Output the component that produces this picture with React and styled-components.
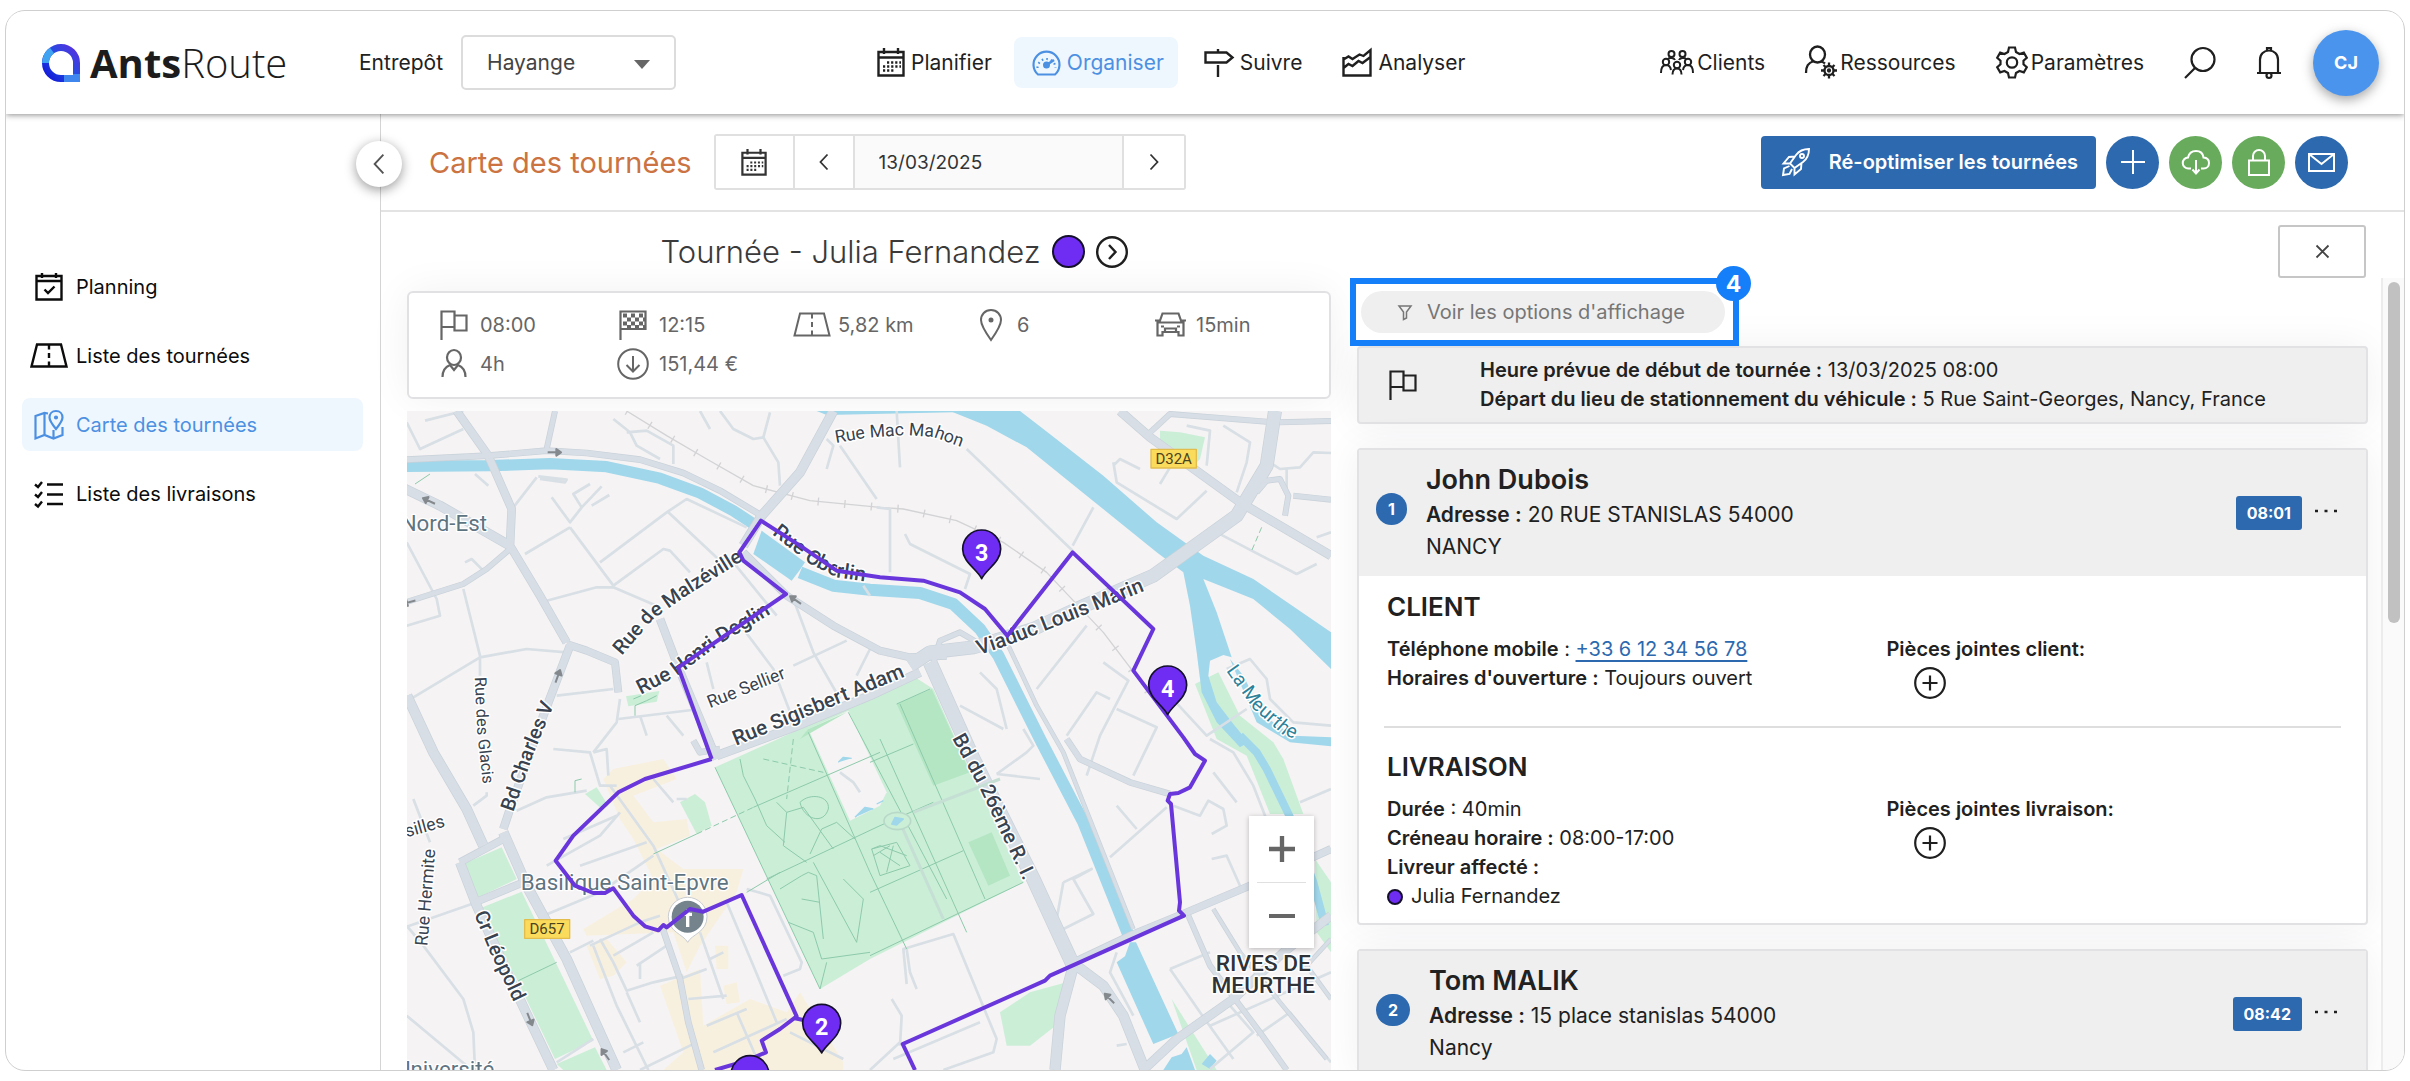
import styled, { createGlobalStyle } from 'styled-components';

const GlobalStyle = createGlobalStyle`
    * { box-sizing: border-box; }
    body {
        margin: 0;
        background: #fff;
        color: #212121;
        font-family: Inter, "Liberation Sans", sans-serif;
        font-size: 20px;
    }
    button, input, select { font: inherit; color: inherit; }
    button { cursor: pointer; padding: 0; }
    a { text-decoration: none; }
`;

/* ---------- shell ---------- */

const Frame = styled.div`
    display: flex;
    flex-direction: column;
    height: calc(100vh - 20px);
    margin: 10px 5px;
    border: 1px solid #cfcfcf;
    border-radius: 20px;
    overflow: hidden;
`;

const Header = styled.header`
    display: flex;
    align-items: center;
    flex: none;
    height: 103px;
    padding: 0 25px 0 36px;
    background: #fff;
    font-size: 21px;
    box-shadow: 0 1px 6px rgba(0, 0, 0, 0.45);
    z-index: 2;
`;

const Body = styled.div`
    display: flex;
    flex: 1;
    min-height: 0;
`;

const Svg = styled.svg.attrs({ 'aria-hidden': true })`
    display: block;
    flex: none;
    fill: none;
    stroke: currentColor;
    stroke-width: ${({ $w }) => $w || 2};
    overflow: visible;
`;

/* ---------- header ---------- */

const Logo = styled.a`
    display: flex;
    align-items: center;
    gap: 10px;
    width: 317px;
    color: #1c1c1c;
    font: 300 40px 'Open Sans', sans-serif;
    b { font-weight: 700; }
`;

const DepotLabel = styled.label`
    display: flex;
    align-items: center;
    gap: 18px;
`;

const SelectBox = styled.span`
    position: relative;
    svg {
        position: absolute;
        right: 26px;
        top: 25px;
        pointer-events: none;
    }
`;

const Select = styled.select`
    appearance: none;
    width: 215px;
    height: 55px;
    padding: 0 24px;
    border: 2px solid #dcdcdc;
    border-radius: 5px;
    background: #fff;
    color: #444;
`;

const Nav = styled.nav`
    display: flex;
    gap: 8px;
    margin-left: 183px;
`;

const NavLink = styled.a`
    display: flex;
    align-items: center;
    gap: 6px;
    height: 51px;
    padding: 0 14px 0 18px;
    border-radius: 8px;
    color: ${({ $active }) => ($active ? '#4c90e2' : '#1f1f1f')};
    background: ${({ $active }) => ($active ? '#eff7fe' : 'transparent')};
`;

const Tools = styled.div`
    display: flex;
    align-items: center;
    gap: 40px;
    margin-left: auto;
`;

const ToolLink = styled.a`
    display: flex;
    align-items: center;
    gap: 3px;
    color: #1f1f1f;
`;

const IconButton = styled.button`
    border: 0;
    background: none;
    color: #1f1f1f;
`;

const Avatar = styled.button`
    width: 66px;
    height: 66px;
    margin-left: -9px;
    border: 0;
    border-radius: 50%;
    background: #4a94ee;
    color: #fff;
    font-size: 18px;
    font-weight: 700;
    box-shadow: 0 4px 12px rgba(0, 0, 0, 0.35);
`;

/* ---------- sidebar ---------- */

const Sidebar = styled.aside`
    position: relative;
    flex: none;
    width: 375px;
    padding: 146px 17px 0 16px;
    border-right: 1px solid #d4d4d4;
`;

const Collapse = styled.button`
    position: absolute;
    top: 27px;
    right: -22px;
    display: grid;
    place-items: center;
    width: 46px;
    height: 46px;
    border: 0;
    border-radius: 50%;
    background: #fff;
    color: #555;
    box-shadow: 0 3px 12px rgba(0, 0, 0, 0.4);
    z-index: 1;
`;

const Menu = styled.nav`
    display: flex;
    flex-direction: column;
    gap: 16px;
`;

const MenuLink = styled.a`
    display: flex;
    align-items: center;
    gap: 8px;
    height: 53px;
    padding-left: 7px;
    border-radius: 8px;
    color: ${({ $active }) => ($active ? '#4c90e2' : '#0c0c0c')};
    background: ${({ $active }) => ($active ? '#eff7fe' : 'transparent')};
`;

const MenuIcon = styled.span`
    display: grid;
    place-items: center;
    width: 39px;
`;

/* ---------- toolbar ---------- */

const Main = styled.main`
    display: flex;
    flex-direction: column;
    flex: 1;
    min-width: 0;
`;

const Toolbar = styled.div`
    display: flex;
    align-items: center;
    flex: none;
    height: 98px;
    padding: 0 56px 0 48px;
    border-bottom: 2px solid #e3e3e3;
`;

const PageTitle = styled.h1`
    margin: 0 22px 0 0;
    color: #cb7341;
    font-size: 29px;
    font-weight: 400;
`;

const DatePicker = styled.div`
    display: flex;
    height: 56px;
    border: 2px solid #e0e0e0;
    border-radius: 3px;
`;

const DateButton = styled.button`
    display: grid;
    place-items: center;
    width: ${({ $wide }) => ($wide ? '77px' : '60px')};
    border: 0;
    background: #fff;
    color: #333;
    & + & { border-left: 2px solid #e0e0e0; }
`;

const DateInput = styled.input`
    width: 271px;
    padding: 0 24px;
    border: solid #e0e0e0;
    border-width: 0 2px;
    background: #fafafa;
    color: #333;
    font-size: 19px;
`;

const Actions = styled.div`
    display: flex;
    gap: 10px;
    margin-left: auto;
`;

const Primary = styled.button`
    display: flex;
    align-items: center;
    gap: 19px;
    height: 53px;
    padding: 0 18px 0 21px;
    border: 0;
    border-radius: 4px;
    background: #2d69ae;
    color: #fff;
    font-weight: 600;
`;

const Round = styled.button`
    display: grid;
    place-items: center;
    width: 53px;
    height: 53px;
    border: 0;
    border-radius: 50%;
    background: ${({ $green }) => ($green ? '#68ab5c' : '#2d69ae')};
    color: #fff;
`;

/* ---------- tour column ---------- */

const Workspace = styled.div`
    display: grid;
    grid-template-columns: minmax(0, 924fr) minmax(0, 1054fr);
    gap: 19px;
    flex: 1;
    min-height: 0;
    padding-left: 26px;
`;

const TourColumn = styled.section`
    display: flex;
    flex-direction: column;
    min-height: 0;
`;

const TourTitle = styled.h2`
    display: flex;
    align-items: center;
    justify-content: center;
    gap: 11px;
    height: 79px;
    margin: 0 0 0 50px;
    color: #3a3a3a;
    font-size: 31px;
    font-weight: 300;
`;

const Dot = styled.span`
    display: inline-block;
    flex: none;
    width: ${({ $size }) => $size}px;
    height: ${({ $size }) => $size}px;
    border: 2px solid #14102b;
    border-radius: 50%;
    background: #6f2cf3;
`;

const Stats = styled.ul`
    display: grid;
    grid-template-columns: repeat(5, 1fr);
    grid-auto-rows: 39px;
    flex: none;
    height: 108px;
    margin: 0;
    padding: 12px 0 0 25px;
    border: 2px solid #e1e1e3;
    border-radius: 6px;
    background: #fff;
    box-shadow: 0 0 40px rgba(30, 30, 60, 0.06);
    list-style: none;
`;

const Stat = styled.li`
    display: flex;
    align-items: center;
    gap: 6px;
    color: #666;
`;

const StatIcon = styled.span`
    display: grid;
    place-items: center;
    width: 40px;
`;

const MapBox = styled.div`
    position: relative;
    flex: 1;
    min-height: 0;
    margin-top: 12px;
    overflow: hidden;
    background: #f5f3f4;
`;

const MapSvg = styled.svg`
    display: block;
    width: 100%;
    height: 100%;
    fill: none;
    stroke-linejoin: round;
    font-family: Roboto, sans-serif;
`;

const ZoomBox = styled.div`
    position: absolute;
    right: 17px;
    bottom: 122px;
    display: flex;
    flex-direction: column;
    width: 65px;
    padding: 0 8px;
    background: #fff;
    box-shadow: 0 1px 5px rgba(0, 0, 0, 0.25);
`;

const ZoomButton = styled.button`
    display: grid;
    place-items: center;
    height: 66px;
    border: 0;
    background: #fff;
    color: #666;
    & + & { border-top: 1px solid #e0e0e0; }
`;

/* ---------- stops column ---------- */

const StopColumn = styled.section`
    display: flex;
    flex-direction: column;
    min-height: 0;
`;

const PanelTop = styled.div`
    display: flex;
    justify-content: flex-end;
    flex: none;
    height: 66px;
    padding: 13px 38px 0 0;
`;

const Close = styled.button`
    display: grid;
    place-items: center;
    width: 88px;
    height: 53px;
    border: 2px solid #c6c6c6;
    border-radius: 3px;
    background: #fff;
    color: #444;
`;

const Scroller = styled.div`
    display: flex;
    flex: 1;
    min-height: 0;
`;

const List = styled.div`
    flex: 1;
    padding-right: 13px;
`;

const Track = styled.div`
    flex: none;
    width: 23px;
    padding: 4px 0 0 5px;
    border-left: 2px solid #ececec;
    background: #fafafa;
`;

const Thumb = styled.div`
    width: 12px;
    height: 341px;
    border-radius: 6px;
    background: #c1c1c1;
`;

const Callout = styled.div`
    position: relative;
    width: 389px;
    height: 68px;
    padding: 7px 5px;
    border: 6px solid #147ff9;
    background: #fff;
    z-index: 1;
`;

const CalloutNumber = styled.span`
    position: absolute;
    top: -18px;
    right: -18px;
    display: grid;
    place-items: center;
    width: 35px;
    height: 35px;
    border-radius: 50%;
    background: #147ff9;
    color: #fff;
    font-size: 23px;
    font-weight: 700;
`;

const Options = styled.button`
    display: flex;
    align-items: center;
    gap: 15px;
    width: 364px;
    height: 42px;
    padding-left: 37px;
    border: 0;
    border-radius: 21px;
    background: #efefef;
    color: #767676;
`;

const Card = styled.article`
    margin: 0 0 24px 7px;
    border: 2px solid #e2e2e4;
    border-radius: 4px;
    background: #fff;
    box-shadow: 0 0 40px rgba(30, 30, 60, 0.06);
`;

const Departure = styled(Card)`
    display: flex;
    align-items: center;
    gap: 63px;
    height: 78px;
    padding-left: 30px;
    background: #efefef;
`;

const CardHead = styled.header`
    display: flex;
    align-items: center;
    height: 126px;
    padding: 0 28px 0 17px;
    background: #efefef;
`;

const Order = styled.span`
    display: grid;
    place-items: center;
    height: 32px;
    margin: 0 19px 8px 0;
    padding: 0 12px;
    border-radius: 16px;
    background: #2d69ae;
    color: #fff;
    font-size: 16px;
    font-weight: 700;
`;

const Who = styled.div`
    flex: 1;
    font-size: 21px;
    line-height: 32px;
`;

const Name = styled.h3`
    margin: 0 0 3px;
    font-size: 27px;
    font-weight: 600;
    line-height: 32px;
`;

const Time = styled.time`
    padding: 0 11px;
    border-radius: 3px;
    background: #2d69ae;
    color: #fff;
    font-size: 16px;
    font-weight: 700;
    line-height: 34px;
`;

const More = styled(IconButton)`
    margin-left: 12px;
`;

const Section = styled.section`
    margin: 0 25px;
    padding: 15px 3px 27px;
    & + & {
        padding: 23px 3px 12px;
        border-top: 2px solid #dedede;
    }
`;

const SectionTitle = styled.h4`
    margin: 0 0 12px;
    font-size: 26px;
    font-weight: 600;
    line-height: 32px;
`;

const Columns = styled.div`
    display: grid;
    grid-template-columns: 501fr 453fr;
    line-height: 29px;
`;

const Line = styled.div`
    line-height: 29px;
    b { font-weight: 600; }
`;

const AddressLine = styled(Line)`
    line-height: 32px;
`;

const Phone = styled.a`
    color: #2d69ae;
    text-decoration: underline;
    text-underline-offset: 4px;
`;

const Courier = styled(Line)`
    display: flex;
    align-items: center;
    gap: 8px;
`;

const AddButton = styled(IconButton)`
    display: block;
    margin: 3px 0 0 28px;
`;

/* ---------- icons ---------- */

const CalendarIcon = ({ size = 28 }) => (
    <Svg width={size} height={size + 1} viewBox="0 0 28 29" $w={2.4}>
        <path d="M1.5 4h25v23.500h-25zM1.500 9.500h25M7 0v6M21 0v6" />
        <path d="M10 14.500h14M6 18.500h18M6 22.500h12" strokeWidth="2.400" strokeDasharray="2.200 1.900" />
    </Svg>
);

const GaugeIcon = () => (
    <Svg width="29" height="26" viewBox="0 0 29 26" $w={2.2}>
        <path d="M6 24.500A13 13 0 1 1 23 24.500Z" />
        <path d="M5.500 18a9 9 0 1 1 18 0" strokeDasharray="1.600 3" />
        <circle cx="14.500" cy="15" r="2.400" fill="currentColor" />
        <path d="M14.500 15L22 10" strokeWidth="2.600" />
    </Svg>
);

const SignIcon = () => (
    <Svg width="30" height="28" viewBox="0 0 30 28" $w={2.4}>
        <path d="M1.500 3.500h21L28.500 8.500l-6 5h-21zM14 0v3.500M14 16v12" />
    </Svg>
);

const ChartIcon = () => (
    <Svg width="30" height="29" viewBox="0 0 30 29" $w={2.4}>
        <path d="M1.500 9v18.500h27V2l-7 6-4-1.500-7 4.500-4-2.500-5 3M1.500 20l5-4 4 2 6-5 4 2 8-6" />
    </Svg>
);

const PeopleIcon = () => (
    <Svg width="34" height="25" viewBox="0 0 34 25" $w={2}>
        <circle cx="11.500" cy="4" r="3" />
        <circle cx="22.500" cy="4" r="3" />
        <circle cx="6" cy="12" r="3.200" />
        <circle cx="28" cy="12" r="3.200" />
        <circle cx="17" cy="15" r="3.200" />
        <path d="M1 23c0-5 2-8 5-8s4.500 2 5 5M33 23c0-5-2-8-5-8s-4.500 2-5 5M12.500 24.500c0-4 1.500-6 4.500-6s4.500 2 4.500 6M8 9c1-1.500 6-1.500 7 1M26 9c-1-1.500-6-1.500-7 1" />
    </Svg>
);

const StaffIcon = () => (
    <Svg width="32" height="33" viewBox="0 0 32 33" $w={2.3}>
        <ellipse cx="12.500" cy="8.500" rx="7.500" ry="8" />
        <path d="M1 27c0-7 2-10 8-12M16 15.500c2 .5 3 1 4 2" />
        <circle cx="24" cy="24.500" r="4.500" />
        <circle cx="24" cy="24.500" r="1" />
        <path d="M24 16.500V20M24 29v3.500M16 24.500h3.500M28.500 24.500H32M18.500 19l2.300 2.300M27.200 27.700l2.300 2.300M29.500 19l-2.300 2.300M20.800 27.700L18.500 30" />
    </Svg>
);

const GearIcon = () => (
    <Svg width="32" height="33" viewBox="0 0 32 33" $w={2.2}>
        <path d="M13 1.500h6l1 4.500 3.500 2 4.300-1.400 3 5.200-3.300 3v3.400l3.300 3-3 5.200-4.300-1.400L20 27l-1 4.500h-6L12 27l-3.500-2-4.300 1.400-3-5.200 3.300-3v-3.400l-3.300-3 3-5.200L8.500 8 12 6z" />
        <circle cx="16" cy="16.500" r="5.200" />
    </Svg>
);

const SearchIcon = () => (
    <Svg width="32" height="32" viewBox="0 0 32 32" $w={2.2}>
        <circle cx="19" cy="12.500" r="11.500" />
        <path d="M11 21L1 31" />
    </Svg>
);

const BellIcon = () => (
    <Svg width="26" height="32" viewBox="0 0 26 32" $w={2.2}>
        <path d="M1 26h24M4 26V12.500C4 7 8 3.500 13 3.500S22 7 22 12.500V26M11 3.500V1h4v2.500" />
        <circle cx="13" cy="28.500" r="2.500" />
    </Svg>
);

const Chevron = ({ h = 16, right, w = 1.800 }) => (
    <Svg width={h / 2} height={h} viewBox="0 0 8 16" $w={w}>
        <path d={right ? 'M.5.5l7 7.500-7 7.500' : 'M7.500.5l-7 7.500 7 7.500'} />
    </Svg>
);

const PlanningIcon = () => (
    <Svg width="28" height="28" viewBox="0 0 28 28" $w={2.4}>
        <path d="M1.500 3h25v23.500h-25zM1.500 8h25M7 0v5M21 0v5M9.500 16.500l3.500 3.500 6.500-6.500" />
    </Svg>
);

const RoadIcon = ({ w = 2.4 }) => (
    <Svg width="38" height="25" viewBox="0 0 38 25" $w={w}>
        <path d="M7 1.500h24L36.500 23.500h-35z" />
        <path d="M19 1.500v22" strokeDasharray="5 3.500" />
    </Svg>
);

const FoldMapIcon = () => (
    <Svg width="30" height="30" viewBox="0 0 30 30" $w={2.2}>
        <path d="M14 3.500L10.500 3 1.500 6v22.500l9-3.500 9 3.500 9-3.500V17M10.500 3v22M19.500 20v8" />
        <path d="M22 1c-4 0-6.500 3-6.500 6.500C15.500 11 22 19 22 19s6.500-8 6.500-11.500C28.500 4 26 1 22 1z" />
        <circle cx="22" cy="7.500" r="1" />
    </Svg>
);

const ChecklistIcon = () => (
    <Svg width="29" height="26" viewBox="0 0 29 26" $w={2.4}>
        <path d="M13 3.500h16M13 13.500h16M13 23h16M1 3.500L4 6l4-5M1 13.500L4 16l4-5M1 23l3 2.500 4-5" />
    </Svg>
);

const RocketIcon = () => (
    <Svg width="28" height="28" viewBox="0 0 28 28" $w={1.9}>
        <path d="M27 1c-6 0-10 2-13 6L8 15.500l4.500 4.500 8.500-6c4-3 6-7 6-13zM13 8.500L7 9l-5.500 6.500L8 15.500M19.500 15l-.500 6-6.500 5.500V20M7.500 18L2 20.500 1 27l6.500-1L10 21" />
        <circle cx="20" cy="8" r="2" />
    </Svg>
);

const PlusIcon = ({ size = 24, w = 2 }) => (
    <Svg width={size} height={size} viewBox="0 0 24 24" $w={w}>
        <path d="M12 0v24M0 12h24" />
    </Svg>
);

const CloudIcon = () => (
    <Svg width="28" height="25" viewBox="0 0 28 25" $w={2}>
        <path d="M9 18.500H6.500A5.500 5.500 0 0 1 6 7.500C7 3 10 1 14 1s7 2.500 7.500 6.500c3.500.3 5.500 2.500 5.500 5.500s-2 5.500-5.500 5.500H19M14 10v13M10.500 19.500L14 23.500l3.500-4" />
    </Svg>
);

const LockIcon = () => (
    <Svg width="22" height="27" viewBox="0 0 22 27" $w={2}>
        <path d="M1 11.500h20V26H1zM5 11.500V7a6 6 0 0 1 12 0v4.500" />
    </Svg>
);

const MailIcon = () => (
    <Svg width="27" height="19" viewBox="0 0 27 19" $w={2}>
        <path d="M1 1h25v17H1zM1 1l12.500 10L26 1" />
    </Svg>
);

const NextCircle = () => (
    <Svg width="32" height="32" viewBox="0 0 32 32" $w={2.4}>
        <circle cx="16" cy="16" r="14.800" />
        <path d="M13 9l6.500 7-6.500 7" />
    </Svg>
);

const FlagIcon = () => (
    <Svg width="28" height="30" viewBox="0 0 28 30" $w={2.2}>
        <path d="M1.500 30V1.500h13V17h-13M14.500 5.500h12v15h-12z" />
    </Svg>
);

const FinishIcon = () => (
    <Svg width="28" height="30" viewBox="0 0 28 30" $w={2.2}>
        <path d="M1.500 30V1.500h25V19h-25" />
        <path d="M4 5.500h21M4 13.500h21" strokeWidth="4" strokeDasharray="4 4" />
        <path d="M8 9.500h18M8 17h18" strokeWidth="4" strokeDasharray="4 4" />
    </Svg>
);

const PinIcon = () => (
    <Svg width="22" height="32" viewBox="0 0 22 32" $w={2}>
        <path d="M11 1C5 1 1 5.500 1 11c0 6 10 20 10 20s10-14 10-20c0-5.500-4-10-10-10z" />
        <circle cx="11" cy="11" r="1.500" fill="currentColor" />
    </Svg>
);

const CarIcon = () => (
    <Svg width="31" height="25" viewBox="0 0 31 25" $w={2.2}>
        <path d="M2.500 10.500h26v13h-5V20h-16v3.500h-5zM4.500 10l3-8.500h16l3 8.500M0 8.500h5M26 8.500h5M10 19v-2.500h11V19" />
        <path d="M6 14.500h3M22 14.500h3" />
    </Svg>
);

const DriverIcon = () => (
    <Svg width="26" height="29" viewBox="0 0 26 29" $w={2.2}>
        <ellipse cx="13" cy="8.500" rx="7" ry="7.500" />
        <path d="M1.500 28c0-6 2.500-10 7.500-12l4 5 4-5c5 2 7.500 6 7.500 12" />
    </Svg>
);

const CostIcon = () => (
    <Svg width="32" height="32" viewBox="0 0 32 32" $w={2}>
        <circle cx="16" cy="16" r="14.800" />
        <path d="M16 8v15M9.500 17l6.500 6.500 6.500-6.500" />
    </Svg>
);

const FilterIcon = () => (
    <Svg width="14" height="15" viewBox="0 0 14 15" $w={1.500}>
        <path d="M1 1h12L8.500 7v6l-3 1.500V7z" />
    </Svg>
);

const CloseIcon = () => (
    <Svg width="13" height="13" viewBox="0 0 13 13" $w={1.800}>
        <path d="M.5.5l12 12M12.500.5l-12 12" />
    </Svg>
);

const DotsIcon = () => (
    <Svg width="24" height="20" viewBox="0 0 24 20">
        <path d="M1 8h3M10.500 8h3M20 8h3" strokeWidth="2.600" />
    </Svg>
);

const AddIcon = () => (
    <Svg width="32" height="32" viewBox="0 0 32 32" $w={2.2}>
        <circle cx="16" cy="16" r="14.800" />
        <path d="M16 8.500v15M8.500 16h15" />
    </Svg>
);

const LogoMark = () => (
    <Svg width="38" height="38" viewBox="0 0 38 38" $w={7}>
        <defs>
            <linearGradient id="mark" x1="0" y1="1" x2="1" y2="0">
                <stop offset="0" stopColor="#1413d8" />
                <stop offset=".5" stopColor="#1f4fe0" />
                <stop offset="1" stopColor="#5a2fe0" />
            </linearGradient>
        </defs>
        <path d="M34.500 34.500H19A15.500 15.500 0 1 1 34.500 19z" stroke="url(#mark)" />
        <path d="M3.500 19A15.500 15.500 0 0 1 10 6.500" stroke="#3fa3f2" />
        <path d="M22 34.500h12.500V30" stroke="#3f86ee" />
    </Svg>
);

/* ---------- map ---------- */

const water = [
    'M1650 36H1860L1930 90 2110 230 2270 370 2410 470 2560 540 2793 700V810L2670 690 2560 600 2410 540 2450 640 2495 775 2470 768 2430 785 2425 830 2450 910 2500 975 2545 1030 2520 1045 2450 970 2405 880 2390 760 2370 620 2350 520 2270 460 2060 290 1880 145 1760 80Z',
    'M1085 395L1060 465 1175 545 1200 512 1215 490Z',
    'M2150 1690L2175 1672 2190 1630H2208L2335 1905 2260 1935Z',
    'M2290 2013L2315 1975 2345 1965 2360 1945 2385 2013Z',
    'M2490 780L2530 830 2590 950 2680 1010 2793 1015V1042L2670 1030 2570 970Z',
    'M1660 40H1700V36H1250L1280 48Z',
    'M2405 1995L2430 1965 2450 1985 2430 2010Z',
];

const canals = [
    ['M0 202L270 200 450 194 620 203 780 238 900 282 1000 335 1065 378', 34],
    ['M1200 520L1300 560 1410 572 1560 582 1660 615 1740 690 1795 770 1850 880 1920 1020 2050 1270 2190 1620', 36],
    ['M2520 1010L2570 1060 2600 1110 2668 1250 2740 1450 2775 1580', 24],
];

const parks = [
    'M945 1105L1200 990 1410 895 1550 838 1600 870 1680 1050 1870 1450 1410 1680 1260 1770Z',
    'M190 1395L305 1345 350 1440 235 1495Z',
    'M235 1530L365 1478 580 1925 465 1980 350 1740Z',
    'M470 1995L585 1945 620 2013H490Z',
    'M555 1185L590 1165 625 1220 605 1230Z',
    'M840 1210L885 1185 915 1210 935 1280 890 1305Z',
    'M1800 1840L1890 1780 2000 1750 1980 1870 1890 1940 1820 1940Z',
    'M678 892L778 876 770 908 685 922Z',
    'M2280 95L2340 100 2415 115 2400 180 2370 210 2280 130Z',
    'M2385 855L2455 820 2520 950 2620 1030 2650 1080 2710 1245 2610 1245 2540 1070 2450 1020Z',
    'M2315 1800L2450 2013H2390Z',
    'M2745 1380L2793 1450V1660L2750 1600Z',
];

const darkParks = ['M1490 915L1595 870 1710 1120 1600 1160Z', 'M1705 1330L1775 1300 1830 1430 1765 1460Z', 'M1200 1020L1225 990 1340 940Z'];

const sand = [
    'M610 1140L640 1110 790 1080 830 1140 700 1190 760 1270 860 1260 870 1310 770 1350 850 1410 1030 1410 1010 1480 900 1640 860 1720 820 1600 560 1610 550 1590 700 1500 760 1440 700 1320 660 1260Z',
    'M560 1640L620 1620 680 1690 640 1730 600 1740Z',
    'M780 1760L900 1710 910 1880 1050 1800 1160 1840 1200 1780 1330 1990 1330 2013H790L850 1960Z',
    'M945 1640H985V1710H950ZM970 1760L1010 1750 1020 1810 980 1815Z',
];

const roads = [
    ['M170 36L265 170 335 330 330 440 420 590 500 730', 26],
    ['M0 262L120 320 330 440', 30],
    ['M0 615L190 555 260 510 330 450', 18],
    ['M21 182L265 170 440 155 560 162 720 182 850 222 960 275 1085 350', 20],
    ['M465 36L440 150', 18],
    ['M1300 36L1200 220 1085 350 1030 440', 30],
    ['M1030 460L1160 590 1300 680 1440 755 1530 775 1640 770', 24],
    ['M1530 800L1590 760 1720 745 1900 690 2030 630 2260 530 2510 350 2600 200 2625 36', 42],
    ['M1590 790L1720 1080 1900 1440 2020 1700', 44],
    ['M2020 1700L1980 1850 1965 2013', 34],
    ['M2030 1700L2110 1760 2170 1850 2235 2013', 32],
    ['M2000 1700L2190 1610 2360 1540 2550 1460 2793 1350', 24],
    ['M2230 2013L2330 1920 2500 1800 2650 1660 2793 1550', 28],
    ['M510 740L430 950 330 1230 310 1290', 26],
    ['M500 735L560 755 645 790 655 880', 24],
    ['M21 890L100 1060 200 1230 250 1340', 32],
    ['M310 1300L380 1460 500 1680 650 2013', 32],
    ['M180 1390L230 1520 340 1760 460 2013', 30],
    ['M180 1390L320 1315M225 1510L370 1450', 24],
    ['M780 660L835 805 950 1080', 26],
    ['M950 1070L1180 985 1410 890 1560 820', 28],
    ['M785 1580L840 1740 865 1870 905 2013', 20],
    ['M2160 36L2250 115 2520 310 2793 470', 28],
    ['M2240 110L2310 45 2600 68M2640 70L2793 66', 18],
    ['M2570 280L2600 245 2640 240 2665 290 2655 350M2680 290L2793 302', 18],
    ['M2000 1020L2040 1080 2190 1150 2310 1185', 20],
    ['M1825 740L1910 920 1990 1060 2200 1590', 14],
    ['M1600 790L1620 725 1680 700 1740 735', 18],
    ['M2365 1550L2430 1700 2580 1900 2660 2013', 18],
    ['M2440 1530L2520 1660 2640 1810 2780 1980', 14],
    ['M2793 1620L2720 1700 2793 1800', 14],
    ['M880 1025L900 1060 960 1050', 20],
];

const lanes = [
    'M75 65L190 36M20 70L60 150L190 90M225 225L265 260M410 235L340 325M415 232L500 242 495 250 420 240',
    'M455 295L510 370 545 325 520 285 570 255M545 325L605 262M575 320L628 288M510 385L640 560M375 465L510 385M600 490L800 340 860 300 1040 385M805 340L965 490M640 560L790 450 810 455 870 520M440 605L590 565 640 565 780 625',
    'M20 430L110 600 120 650 70 665 20 680M190 570L240 770 240 830M40 895L240 775 380 750 500 760M195 490L215 480 250 515',
    'M655 960L900 930M470 890L640 870M640 60L690 100 710 140 780 180M680 100L740 95 820 140V195M960 36L1000 90 1060 120 1090 115 1110 40M1090 115L1135 190 1140 260M1280 120L1300 140 1280 210M1320 140L1430 300M900 36L930 90',
    'M1430 325L1470 330 1470 520M1515 405L1530 435 1710 525 1695 570M1490 36L1500 205M1700 150L2018 455M2018 440L2080 325M1390 560L1410 590M1180 600L1240 760 1320 900M1130 650L1000 490M1030 690L1120 810 1190 990M1180 800L1340 725M1370 830L1410 750M920 790L940 870',
    'M1910 870L2060 680M2110 790L2185 845 2100 1010 2060 1130M2150 930L2270 985 2200 1130M1740 820L1790 870 1820 990M2300 880L2420 1010 2540 930M2130 900L2090 880 2000 1010M1790 1125L1880 1060 1900 1040 1870 990M1790 1125L1920 1140M1680 920L1810 990',
    'M2140 190L2150 250 2330 360 2420 275M2220 210L2160 180 2140 200M2280 255L2310 205M2360 80L2430 95 2420 200M2470 80L2550 130 2540 190 2510 280M2610 190L2640 210 2700 205 2740 160 2793 162M2660 210V290M2450 400L2690 525 2750 495M2750 415L2793 400',
    'M2430 1020L2500 1060 2560 1160 2630 1340M2320 1220L2400 1250 2425 1205 2470 1230 2480 1280 2435 1305M2435 1380L2480 1370 2520 1460M2300 1225L2130 1375M2150 1220L2210 1290M2440 1120L2510 1210M2480 810L2550 780 2600 840 2610 900 2680 970 2793 980M2700 1210L2793 1170',
    'M1990 1450L2075 1410 2020 1440 2080 1545 1990 1590M1990 1450L1970 1560M1520 1755L1510 1650 1660 1605 1790 1920 1780 1960 1630 2013M1520 1650L1530 1720 1550 1770M1475 1800L1505 1850 1500 1940M1480 1980L1740 1870M1410 2013L1500 1930',
    'M2310 1710L2430 1660M2310 1710L2400 1840 2500 1980M2430 1880L2793 1720M2490 1820L2560 1900 2430 2010M2570 1910L2670 1840 2793 1990M2150 1660L2130 1720 2200 1850M2150 1940L2180 1935',
    'M40 1200L90 1330M0 1590L230 1510M20 1580L70 1640 190 1800 220 1900 225 2013M20 1850L200 2000M220 1220L260 1190 260 1180M350 1235L440 1195 560 1175M460 1050L570 1060 600 1160 650 1160M580 1060L620 1050 625 1130',
    'M440 1400L600 1310 660 1240M540 1400L740 1330M430 1550L600 1480 760 1370M490 1320L650 1250M630 1160L760 1340 860 1560M760 1140L820 1210M570 1640L720 1570 780 1550M580 1640L650 1820 745 2013M600 1620L640 1690 680 1775 760 1750 850 1730',
    'M680 1780L720 1870M710 1700L800 1640M720 1740V1690M640 1670L760 1600M900 1600L970 1800M930 1680L970 1660M840 1740L920 1710M865 1800L980 1790M920 1880L1040 1830M940 1960L1160 1860M720 2013L890 1930M1010 1840L1080 2000',
    'M980 1510L1060 1700 1130 1870M1040 1470L1110 1490 1205 1690 1200 1710 1150 1730M1170 1900L1330 1980M670 1960L730 1930M470 1990L580 1920M510 1660L580 1625M860 1200L830 1200',
    'M1320 1120L1360 1150 1380 1180M660 900L650 970 580 1060M720 950L740 1010M800 950L850 1010',
];

const rails = 'M680 36L800 110 920 180 1060 260 1230 305 1440 325 1510 330 1670 365 1810 430 1940 520 2110 700 2270 910';

const trails = [
    'M945 1105L1260 1770M1225 1000L1410 1420 1520 1650M1345 940L1640 1500M1500 915L1755 1500M1490 915L1590 870M1410 1090L1540 1035M1060 1225L1440 1060M1100 1440L1440 1280 1600 1210M1410 1480L1690 1355M1410 1670L1870 1450M1440 1020L1700 1600',
    'M1020 1080L1030 1130 1065 1200 1100 1280 1155 1330M1160 1240L1150 1340 1220 1390M1130 1210L1160 1240 1210 1225 1300 1350M1200 1210C1230 1180 1290 1190 1285 1230 1270 1280 1210 1260 1200 1210M1230 1365L1265 1290 1310 1270 1365 1320M1140 1470L1205 1430 1225 1420 1250 1430 1270 1620M1240 1390L1370 1630 1390 1500 1330 1440M1165 1570L1240 1600 1265 1680 1410 1660M1205 1500L1260 1510M1415 1350L1440 1340 1520 1370M1420 1370L1470 1340M1260 1770L1280 1690',
    'M760 1365L890 1305M1040 1480L1140 1420M355 1745L470 1690M525 1180V1145L545 1140M45 255L90 225M705 950V920L740 905 770 890M700 900L735 885',
];

const mapLabels = [
    { id: 'mac', d: 'M1308 132L1400 116 1520 108 1600 114 1760 172', text: 'Rue Mac Mahon', size: 53 },
    { id: 'oberlin', d: 'M1115 405L1230 495 1310 535 1480 560', text: 'Rue Oberlin', size: 62, weight: 500 },
    { id: 'malz', d: 'M665 770L760 660 860 590 1100 440', text: 'Rue de Malzéville', size: 60, weight: 500 },
    { id: 'deglin', d: 'M722 887L830 832 960 735 1180 605', text: 'Rue Henri Deglin', size: 62, weight: 500 },
    { id: 'sellier', d: 'M930 928L1220 812', text: 'Rue Sellier', size: 53 },
    { id: 'sigisbert', d: 'M1008 1040L1580 806', text: 'Rue Sigisbert Adam', size: 62, weight: 500 },
    { id: 'viaduc', d: 'M1738 768L1860 726 2310 545', text: 'Viaduc Louis Marin', size: 62, weight: 500 },
    { id: 'meurthe', d: 'M2478 815L2560 930 2640 1000 2793 1075', text: 'La Meurthe', size: 58, color: '#2d8199' },
    { id: 'charles', d: 'M340 1240L402 1060 490 850', text: 'Bd Charles V', size: 60, weight: 500 },
    { id: 'bd26', d: 'M1656 1018L1740 1170 1920 1550', text: 'Bd du 26ème R. I.', size: 61, weight: 500 },
    { id: 'leopold', d: 'M222 1545L270 1660 380 1890', text: 'Cr Léopold', size: 60, weight: 500 },
    { id: 'glacis', d: 'M224 835L232 1000 258 1240', text: 'Rue des Glacis', size: 49 },
    { id: 'hermite', d: 'M82 1642L112 1280', text: 'Rue Hermite', size: 53 },
    { id: 'silles', d: 'M20 1315L170 1273', text: 'silles', size: 53 },
];

const routePaths = [
    'M935 1080L835 805 1158 585 1030 485 1018 460 1083 365 1200 440 1310 515 1440 535 1570 545 1680 580 1755 630 1822 710 2018 460 2260 690 2200 815 2350 1015 2385 1065 2415 1085 2370 1165 2335 1182 2310 1185 2303 1205 2313 1215 2340 1510 2337 1535 2352 1550 1950 1730 1935 1745 1508 1935 1545 2013',
    'M935 1080L735 1140 655 1180 520 1310 467 1385 525 1460 580 1482H615L640 1468 700 1550 735 1582 775 1594 790 1578 800 1585 870 1530 910 1538 1025 1488 1190 1852 1140 1890 1085 1925 1098 1960 1040 1985 945 2013M1185 1858L1220 1865',
];

const pins = [
    { n: 3, x: 1745, y: 450 },
    { n: 4, x: 2303, y: 858 },
    { n: 2, x: 1265, y: 1873 },
    { n: 1, x: 1050, y: 2027 },
];

const arrows = [
    [465, 160, 0],
    [85, 305, 205],
    [1185, 602, 215],
    [474, 830, -70],
    [25, 610, 165],
    [390, 1862, 68],
    [615, 1965, 235],
    [2127, 1797, 225],
];

const TourMap = () => (
    <MapSvg viewBox="21 36 2772 1977" preserveAspectRatio="xMidYMin slice" role="img" aria-label="Carte de la tournée">
        {sand.map((d) => <path key={d} d={d} fill="#f8f0df" />)}
        {parks.map((d) => <path key={d} d={d} fill="#cbeed7" />)}
        <path d="M1225 990L1345 935 1460 1180 1440 1220 1350 1265Z" fill="#f5f3f4" />
        {darkParks.map((d) => <path key={d} d={d} fill="#b4e6c3" />)}
        {water.map((d) => <path key={d} d={d} fill="#a0d7ea" />)}
        {canals.map(([d, w]) => <path key={d} d={d} stroke="#a0d7ea" strokeWidth={w} />)}
        <path d={rails} stroke="#d3d3d5" strokeWidth="4" />
        <path d={rails} stroke="#d3d3d5" strokeWidth="24" strokeDasharray="4 76" />
        {lanes.map((d) => <path key={d} d={d} stroke="#d8dfe5" strokeWidth="8" />)}
        {roads.map(([d, w]) => <path key={d} d={d} stroke="#c9d1d9" strokeWidth={w} />)}
        {roads.map(([d, w]) => <path key={d} d={d} stroke="#d7dee5" strokeWidth={w - 4} />)}
        {trails.map((d) => <path key={d} d={d} stroke="#8dcaab" strokeWidth="3" />)}
        <path d="M890 1305L1060 1225M1090 1080L1270 1120M1180 1020L1160 1200M2585 385L2555 455" stroke="#8dcaab" strokeWidth="3" strokeDasharray="18 10" />
        <path d="M1540 1240L1800 1140M1500 1270L1630 1560" stroke="#c5dfd4" strokeWidth="9" />
        <ellipse cx="1492" cy="1266" rx="40" ry="26" fill="#cbeed7" stroke="#b9d9c8" strokeWidth="5" />
        <path d="M1475 1275L1485 1255 1510 1260 1490 1278ZM1315 1090L1330 1075 1355 1078M1365 1255L1395 1225 1420 1230M1430 1215L1450 1205" fill="#a0d7ea" stroke="#a0d7ea" strokeWidth="4" />
        <path d="M1415 1350L1490 1330 1530 1400 1440 1430ZM1440 1360L1500 1400M1480 1340L1460 1420" stroke="#8dcaab" strokeWidth="3" />
        {arrows.map(([x, y, r]) => (
            <path key={x} d="M-22 0H16M4 -10L18 0 4 10Z" stroke="#84898e" strokeWidth="6" fill="#84898e" transform={`translate(${x} ${y}) rotate(${r})`} />
        ))}
        <g fill="#5f7481" stroke="#fff" strokeWidth="8" paintOrder="stroke" fontSize="67">
            <text x="2" y="396">Nord-Est</text>
            <text x="362" y="1472">Basilique Saint-Epvre</text>
            <text x="-12" y="2034">Université</text>
        </g>
        {mapLabels.map(({ id, d, text, size, weight = 400, color = '#38434f' }) => (
            <g key={id}>
                <path id={id} d={d} />
                <text fontSize={size} fontWeight={weight} fill={color} stroke="#fff" strokeWidth="9" paintOrder="stroke">
                    <textPath href={`#${id}`}>{text}</textPath>
                </text>
            </g>
        ))}
        <g fontSize="68" fontWeight="500" fill="#2f3337" stroke="#fff" strokeWidth="9" paintOrder="stroke" textAnchor="middle">
            <text x="2590" y="1716">RIVES DE</text>
            <text x="2590" y="1782">MEURTHE</text>
        </g>
        <g fontSize="45" fill="#4a431f" textAnchor="middle">
            <path d="M374 1562h135v56h-135zM2253 151h136v56h-136z" fill="#fbdb5c" stroke="#e2bd4c" strokeWidth="4" />
            <text x="441" y="1606">D657</text>
            <text x="2321" y="195">D32A</text>
        </g>
        <path d="M863 1630C850 1605 805 1600 805 1553A58 58 0 0 1 921 1553C921 1600 876 1605 863 1630Z" fill="#fff" stroke="#c9ccd0" strokeWidth="3" />
        <circle cx="863" cy="1553" r="48" fill="#74838c" />
        <path d="M863 1530V1584M850 1546H876" stroke="#fff" strokeWidth="10" />
        {routePaths.map((d) => <path key={d} d={d} stroke="#6936dc" strokeWidth="12" />)}
        {pins.map(({ n, x, y }) => (
            <g key={n} transform={`translate(${x} ${y})`}>
                <path d="M0 89C-14 60-57 40-57 0A57 57 0 0 1 57 0C57 40 14 60 0 89Z" fill="#6f2cf3" stroke="#14102b" strokeWidth="5" />
                <text y="36" fontSize="70" fontWeight="700" fill="#fff" textAnchor="middle">{n}</text>
            </g>
        ))}
    </MapSvg>
);

/* ---------- content ---------- */

const navItems = [
    { label: 'Planifier', icon: <CalendarIcon /> },
    { label: 'Organiser', icon: <GaugeIcon />, active: true },
    { label: 'Suivre', icon: <SignIcon /> },
    { label: 'Analyser', icon: <ChartIcon /> },
];

const menuItems = [
    { label: 'Planning', icon: <PlanningIcon /> },
    { label: 'Liste des tournées', icon: <RoadIcon /> },
    { label: 'Carte des tournées', icon: <FoldMapIcon />, active: true },
    { label: 'Liste des livraisons', icon: <ChecklistIcon /> },
];

const stats = [
    { value: '08:00', icon: <FlagIcon /> },
    { value: '12:15', icon: <FinishIcon /> },
    { value: '5,82 km', icon: <RoadIcon w={2} /> },
    { value: '6', icon: <PinIcon /> },
    { value: '15min', icon: <CarIcon /> },
    { value: '4h', icon: <DriverIcon /> },
    { value: '151,44 €', icon: <CostIcon /> },
];

const StopHead = ({ order, name, address, city, time }) => (
    <CardHead>
        <Order>{order}</Order>
        <Who>
            <Name>{name}</Name>
            <AddressLine><b>Adresse :</b> {address}</AddressLine>
            <AddressLine>{city}</AddressLine>
        </Who>
        <Time>{time}</Time>
        <More aria-label="Plus d'actions"><DotsIcon /></More>
    </CardHead>
);

function App() {
    return (
        <>
            <GlobalStyle />
            <Frame>
                <Header>
                    <Logo href="#" aria-label="AntsRoute">
                        <LogoMark />
                        <span><b>Ants</b>Route</span>
                    </Logo>
                    <DepotLabel>
                        Entrepôt
                        <SelectBox>
                            <Select defaultValue="Hayange">
                                <option>Hayange</option>
                            </Select>
                            <Svg width="16" height="9" viewBox="0 0 16 9">
                                <path d="M0 0h16L8 9z" fill="#666" stroke="none" />
                            </Svg>
                        </SelectBox>
                    </DepotLabel>
                    <Nav>
                        {navItems.map(({ label, icon, active }) => (
                            <NavLink key={label} href="#" $active={active}>{icon}{label}</NavLink>
                        ))}
                    </Nav>
                    <Tools>
                        <ToolLink href="#"><PeopleIcon />Clients</ToolLink>
                        <ToolLink href="#"><StaffIcon />Ressources</ToolLink>
                        <ToolLink href="#"><GearIcon />Paramètres</ToolLink>
                        <IconButton aria-label="Rechercher"><SearchIcon /></IconButton>
                        <IconButton aria-label="Notifications"><BellIcon /></IconButton>
                        <Avatar>CJ</Avatar>
                    </Tools>
                </Header>
                <Body>
                    <Sidebar>
                        <Collapse aria-label="Réduire le menu"><Chevron h={20} w={1.500} /></Collapse>
                        <Menu>
                            {menuItems.map(({ label, icon, active }) => (
                                <MenuLink key={label} href="#" $active={active}>
                                    <MenuIcon>{icon}</MenuIcon>
                                    {label}
                                </MenuLink>
                            ))}
                        </Menu>
                    </Sidebar>
                    <Main>
                        <Toolbar>
                            <PageTitle>Carte des tournées</PageTitle>
                            <DatePicker>
                                <DateButton $wide aria-label="Calendrier"><CalendarIcon size={26} /></DateButton>
                                <DateButton aria-label="Jour précédent"><Chevron /></DateButton>
                                <DateInput aria-label="Date" defaultValue="13/03/2025" />
                                <DateButton aria-label="Jour suivant"><Chevron right /></DateButton>
                            </DatePicker>
                            <Actions>
                                <Primary><RocketIcon />Ré-optimiser les tournées</Primary>
                                <Round aria-label="Ajouter"><PlusIcon /></Round>
                                <Round $green aria-label="Télécharger"><CloudIcon /></Round>
                                <Round $green aria-label="Verrouiller"><LockIcon /></Round>
                                <Round aria-label="Envoyer"><MailIcon /></Round>
                            </Actions>
                        </Toolbar>
                        <Workspace>
                            <TourColumn>
                                <TourTitle>
                                    Tournée - Julia Fernandez
                                    <Dot $size={33} />
                                    <IconButton aria-label="Tournée suivante"><NextCircle /></IconButton>
                                </TourTitle>
                                <Stats>
                                    {stats.map(({ value, icon }) => (
                                        <Stat key={value}><StatIcon>{icon}</StatIcon>{value}</Stat>
                                    ))}
                                </Stats>
                                <MapBox>
                                    <TourMap />
                                    <ZoomBox>
                                        <ZoomButton aria-label="Zoom avant"><PlusIcon size={26} w={4} /></ZoomButton>
                                        <ZoomButton aria-label="Zoom arrière">
                                            <Svg width="26" height="4" viewBox="0 0 26 4" $w={4}><path d="M0 2h26" /></Svg>
                                        </ZoomButton>
                                    </ZoomBox>
                                </MapBox>
                            </TourColumn>
                            <StopColumn>
                                <PanelTop>
                                    <Close aria-label="Fermer"><CloseIcon /></Close>
                                </PanelTop>
                                <Scroller>
                                    <List>
                                        <Callout>
                                            <Options><FilterIcon />Voir les options d'affichage</Options>
                                            <CalloutNumber>4</CalloutNumber>
                                        </Callout>
                                        <Departure>
                                            <FlagIcon />
                                            <div>
                                                <Line><b>Heure prévue de début de tournée :</b> 13/03/2025 08:00</Line>
                                                <Line><b>Départ du lieu de stationnement du véhicule :</b> 5 Rue Saint-Georges, Nancy, France</Line>
                                            </div>
                                        </Departure>
                                        <Card>
                                            <StopHead order="1" name="John Dubois" address="20 RUE STANISLAS 54000" city="NANCY" time="08:01" />
                                            <Section>
                                                <SectionTitle>CLIENT</SectionTitle>
                                                <Columns>
                                                    <div>
                                                        <Line><b>Téléphone mobile</b> : <Phone href="tel:+33612345678">+33 6 12 34 56 78</Phone></Line>
                                                        <Line><b>Horaires d'ouverture :</b> Toujours ouvert</Line>
                                                    </div>
                                                    <div>
                                                        <Line><b>Pièces jointes client:</b></Line>
                                                        <AddButton aria-label="Ajouter une pièce jointe client"><AddIcon /></AddButton>
                                                    </div>
                                                </Columns>
                                            </Section>
                                            <Section>
                                                <SectionTitle>LIVRAISON</SectionTitle>
                                                <Columns>
                                                    <div>
                                                        <Line><b>Durée</b> : 40min</Line>
                                                        <Line><b>Créneau horaire :</b> 08:00-17:00</Line>
                                                        <Line><b>Livreur affecté :</b></Line>
                                                        <Courier><Dot $size={16} />Julia Fernandez</Courier>
                                                    </div>
                                                    <div>
                                                        <Line><b>Pièces jointes livraison:</b></Line>
                                                        <AddButton aria-label="Ajouter une pièce jointe livraison"><AddIcon /></AddButton>
                                                    </div>
                                                </Columns>
                                            </Section>
                                        </Card>
                                        <Card>
                                            <StopHead order="2" name="Tom MALIK" address="15 place stanislas 54000" city="Nancy" time="08:42" />
                                        </Card>
                                    </List>
                                    <Track><Thumb /></Track>
                                </Scroller>
                            </StopColumn>
                        </Workspace>
                    </Main>
                </Body>
            </Frame>
        </>
    );
}

export default App;
